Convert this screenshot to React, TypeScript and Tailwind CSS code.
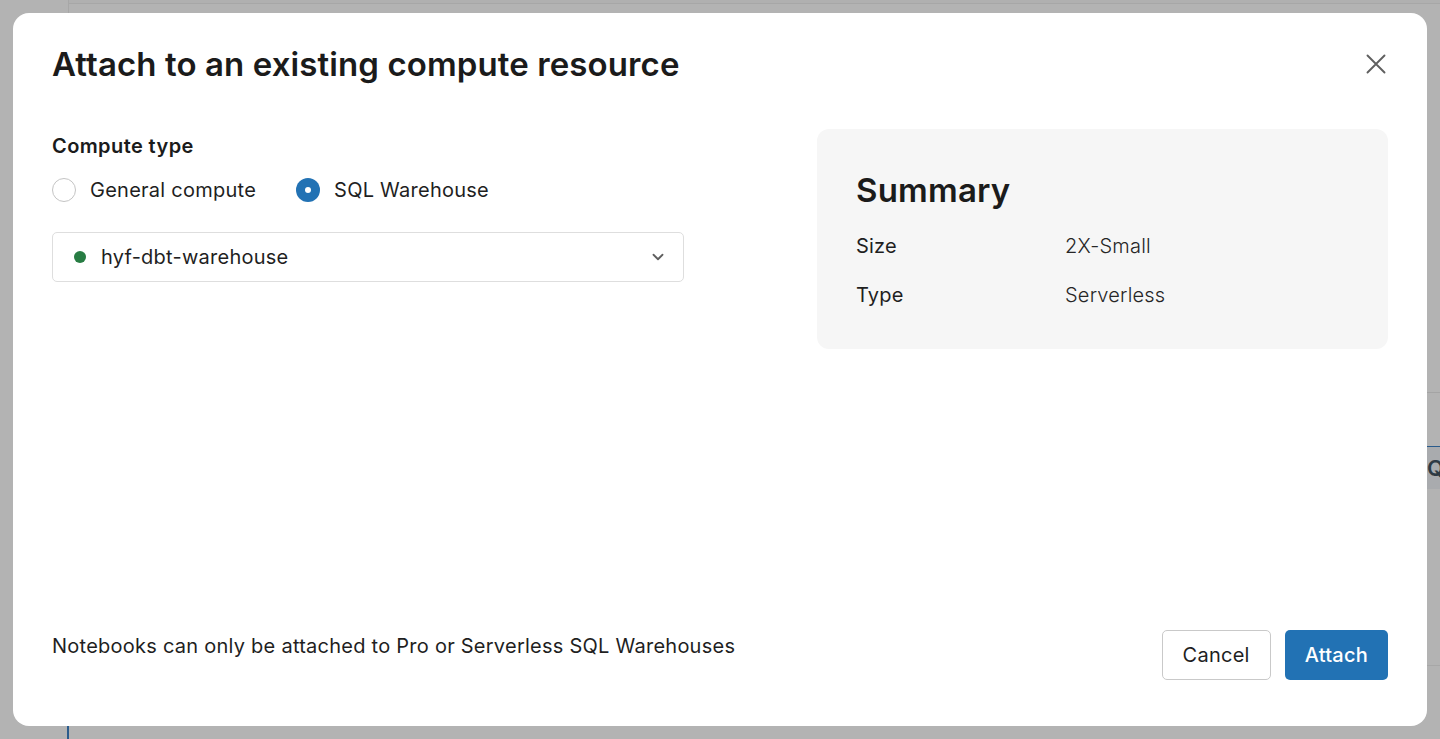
import { ChevronDown } from 'lucide-react';

const font = { fontFamily: 'Inter, "Noto Sans", "Liberation Sans", sans-serif' };

function Radio({ label, checked }: { label: string; checked?: boolean }) {
  return (
    <label className="flex items-center gap-[14px] text-[20px] leading-[28px] tracking-[0.25px] text-[#1f1f1f]">
      {checked ? (
        <span className="flex h-[24px] w-[24px] items-center justify-center rounded-full bg-[#2272b4]">
          <span className="h-[6px] w-[6px] rounded-full bg-white" />
        </span>
      ) : (
        <span className="h-[24px] w-[24px] rounded-full border-[1.5px] border-[#c4c4c4] bg-white" />
      )}
      <span>{label}</span>
    </label>
  );
}

function CloseIcon() {
  return (
    <svg width="20" height="20" viewBox="0 0 20 20" fill="none">
      <path d="M1.5 1.5L18.5 18.5M18.5 1.5L1.5 18.5" stroke="currentColor" strokeWidth="1.9" strokeLinecap="round" />
    </svg>
  );
}

// Faded workspace page that sits under the dialog overlay
function Backdrop() {
  return (
    <div className="flex h-[739px] w-full bg-[#b3b3b3]">
      <div className="flex w-[69px] shrink-0 flex-col">
        <div className="flex-1 border-r border-[#a7a7a7]" />
        <div className="h-[40px] border-r-2 border-[#2a5b8c]" />
      </div>
      <div className="flex flex-1 flex-col">
        <div className="h-[4px] border-b border-[#a7a7a7] bg-[#b0b0b0]" />
        <div className="h-[389px] border-b border-[#a4a4a4]" />
        <div className="h-[54px] border-b border-[#2a5b8c]" />
        <div className="flex h-[42px] items-center bg-[#a9abae] pl-[1358px] text-[22px] font-semibold text-[#2e3a44]">
          Q
        </div>
        <div className="h-[177px] border-b border-[#a7a7a7]" />
      </div>
    </div>
  );
}

export default function App() {
  return (
    <div className="relative h-[739px] w-[1440px] overflow-hidden" style={font}>
      <Backdrop />

      <div className="absolute inset-[13px] flex flex-col rounded-[16px] bg-white px-[39px] pt-[31px] pb-[46px]">
        {/* Header */}
        <div className="flex items-start justify-between">
          <h1 className="text-[33px] font-semibold leading-[40px] tracking-[0.1px] text-[#1b1b1b]">
            Attach to an existing compute resource
          </h1>
          <button className="mt-[10px] mr-[2px] text-[#5f5f5f]">
            <CloseIcon />
          </button>
        </div>

        {/* Body */}
        <div className="mt-[45px] flex flex-1 justify-between">
          <div className="w-[632px] pt-[3px]">
            <div className="text-[20px] font-semibold leading-[28px] tracking-[0.4px] text-[#1b1b1b]">Compute type</div>
            <div className="mt-[16px] flex items-center gap-[40px]">
              <Radio label="General compute" />
              <Radio label="SQL Warehouse" checked />
            </div>
            <div className="mt-[28px] flex h-[50px] items-center rounded-[5px] border border-[#dedede] pl-[21px] pr-[16px]">
              <span className="h-[12px] w-[12px] rounded-full bg-[#277c43]" />
              <span className="ml-[15px] flex-1 text-[20px] leading-[28px] tracking-[0.25px] text-[#1f1f1f]">
                hyf-dbt-warehouse
              </span>
              <ChevronDown size={18} strokeWidth={2.4} className="text-[#5f5f5f]" />
            </div>
          </div>

          <div className="h-[220px] w-[571px] rounded-[12px] bg-[#f6f6f6] px-[39px] pt-[41px]">
            <h2 className="text-[33px] font-semibold leading-[40px] tracking-[0.2px] text-[#1b1b1b]">Summary</h2>
            <div className="mt-[22px] flex flex-col gap-[21px] text-[20px] leading-[28px] tracking-[0.2px]">
              <div className="flex">
                <span className="w-[209px] text-[#1f1f1f]">Size</span>
                <span className="font-light text-[#262626]">2X-Small</span>
              </div>
              <div className="flex">
                <span className="w-[209px] text-[#1f1f1f]">Type</span>
                <span className="font-light text-[#262626]">Serverless</span>
              </div>
            </div>
          </div>
        </div>

        {/* Footer */}
        <div className="flex items-start justify-between">
          <p className="pt-[2px] text-[20px] leading-[28px] tracking-[0.25px] text-[#1f1f1f]">
            Notebooks can only be attached to Pro or Serverless SQL Warehouses
          </p>
          <div className="flex gap-[14px]">
            <button className="h-[50px] rounded-[5px] border border-[#c9c9c9] bg-white px-[20px] text-[20px] tracking-[0.25px] text-[#1f1f1f]">
              Cancel
            </button>
            <button className="h-[50px] rounded-[5px] bg-[#2272b4] px-[20px] text-[20px] font-medium tracking-[0.25px] text-white">
              Attach
            </button>
          </div>
        </div>
      </div>
    </div>
  );
}
